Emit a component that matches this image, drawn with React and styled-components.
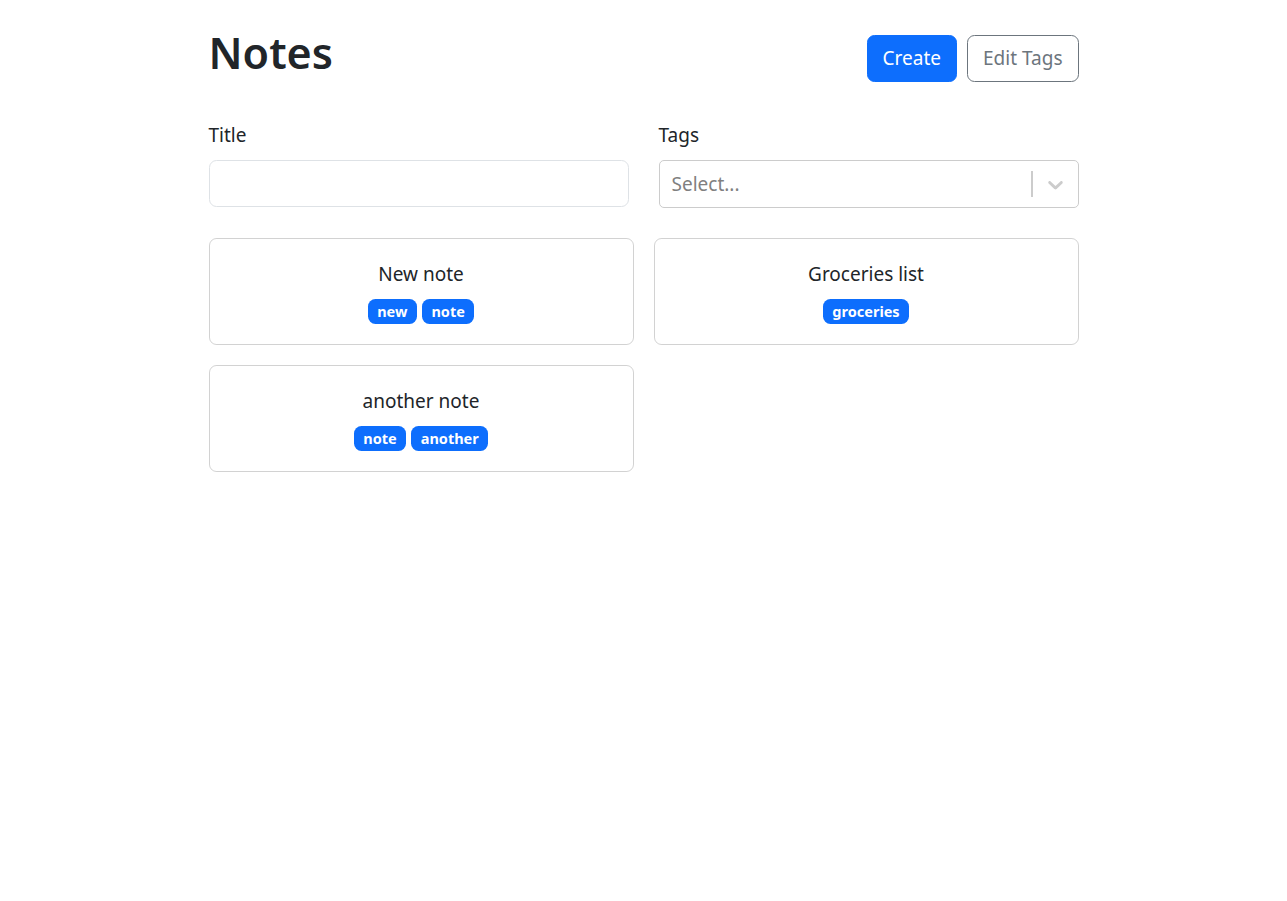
import React from "react";
import styled, { createGlobalStyle } from "styled-components";

const GlobalStyle = createGlobalStyle`
  body {
    margin: 0;
    background: #fff;
    color: #212529;
    font-family: "Noto Sans", "Open Sans", sans-serif;
    font-size: 19px;
    line-height: 30px;
  }
  * { box-sizing: border-box; }
`;

const Container = styled.div`
  width: 870px;
  margin: 0 auto;
  padding-top: 25px;
`;

const Header = styled.div`
  display: flex;
  align-items: center;
  justify-content: space-between;
  margin-bottom: 29px;
`;

const Heading = styled.h1`
  margin: 0 0 10px;
  font-size: 43px;
  font-weight: 600;
  line-height: 56px;
`;

const Actions = styled.div`
  display: flex;
  gap: 10px;
`;

const Button = styled.button`
  height: 47px;
  padding: 0 15px;
  border-radius: 7.5px;
  font-family: inherit;
  font-size: 19px;
  line-height: 30px;
  cursor: pointer;
  border: 1px solid ${(p) => (p.$primary ? "#0d6efd" : "#6c757d")};
  background: ${(p) => (p.$primary ? "#0d6efd" : "#fff")};
  color: ${(p) => (p.$primary ? "#fff" : "#6c757d")};
`;

const FilterRow = styled.div`
  display: grid;
  grid-template-columns: 1fr 1fr;
  gap: 30px;
  margin: 0 0 30px;
`;

const Field = styled.div`
  display: flex;
  flex-direction: column;
`;

const Label = styled.label`
  margin-bottom: 10px;
`;

const Input = styled.input`
  height: 47px;
  padding: 7px 15px;
  border: 1px solid #dee2e6;
  border-radius: 7.5px;
  font-family: inherit;
  font-size: 19px;
  color: #212529;
  outline: none;
`;

const SelectControl = styled.div`
  display: flex;
  align-items: center;
  height: 48px;
  border: 1px solid #ccc;
  border-radius: 5px;
  background: #fff;
`;

const Placeholder = styled.div`
  flex: 1;
  padding: 0 12px;
  color: #808080;
`;

const Separator = styled.span`
  align-self: stretch;
  width: 1.25px;
  margin: 10px 0;
  background: #ccc;
`;

const Indicator = styled.div`
  display: flex;
  padding: 10px;
  color: #ccc;
`;

const CardGrid = styled.div`
  display: grid;
  grid-template-columns: 1fr 1fr;
  gap: 20px;
`;

const Card = styled.a`
  display: flex;
  flex-direction: column;
  align-items: center;
  gap: 10px;
  padding: 20px;
  border: 1px solid rgba(0, 0, 0, 0.175);
  border-radius: 7.5px;
  color: inherit;
  text-decoration: none;
`;

const CardTitle = styled.span`
  font-size: 19px;
`;

const BadgeRow = styled.div`
  display: flex;
  gap: 5px;
  justify-content: center;
`;

const Badge = styled.span`
  padding: 5px 9.5px;
  border-radius: 7.5px;
  background: #0d6efd;
  color: #fff;
  font-size: 14.5px;
  font-weight: 700;
  line-height: 15px;
`;

const notes = [
  { id: 1, title: "New note", tags: ["new", "note"] },
  { id: 2, title: "Groceries list", tags: ["groceries"] },
  { id: 3, title: "another note", tags: ["note", "another"] },
];

const Chevron = () => (
  <svg width="25" height="25" viewBox="0 0 20 20" fill="currentColor">
    <path d="M4.516 7.548c0.436-0.446 1.043-0.481 1.576 0l3.908 3.747 3.908-3.747c0.533-0.481 1.141-0.446 1.574 0 0.436 0.445 0.408 1.197 0 1.615-0.406 0.418-4.695 4.502-4.695 4.502-0.217 0.223-0.502 0.335-0.787 0.335s-0.57-0.112-0.789-0.335c0 0-4.287-4.084-4.695-4.502s-0.436-1.17 0-1.615z" />
  </svg>
);

const App = () => {
  return (
    <>
      <GlobalStyle />
      <Container>
        <Header>
          <Heading>Notes</Heading>
          <Actions>
            <Button $primary>Create</Button>
            <Button>Edit Tags</Button>
          </Actions>
        </Header>
        <FilterRow>
          <Field>
            <Label>Title</Label>
            <Input type="text" />
          </Field>
          <Field>
            <Label>Tags</Label>
            <SelectControl>
              <Placeholder>Select...</Placeholder>
              <Separator />
              <Indicator>
                <Chevron />
              </Indicator>
            </SelectControl>
          </Field>
        </FilterRow>
        <CardGrid>
          {notes.map((note) => (
            <Card key={note.id} href="#">
              <CardTitle>{note.title}</CardTitle>
              <BadgeRow>
                {note.tags.map((tag) => (
                  <Badge key={tag}>{tag}</Badge>
                ))}
              </BadgeRow>
            </Card>
          ))}
        </CardGrid>
      </Container>
    </>
  );
};

export default App;
